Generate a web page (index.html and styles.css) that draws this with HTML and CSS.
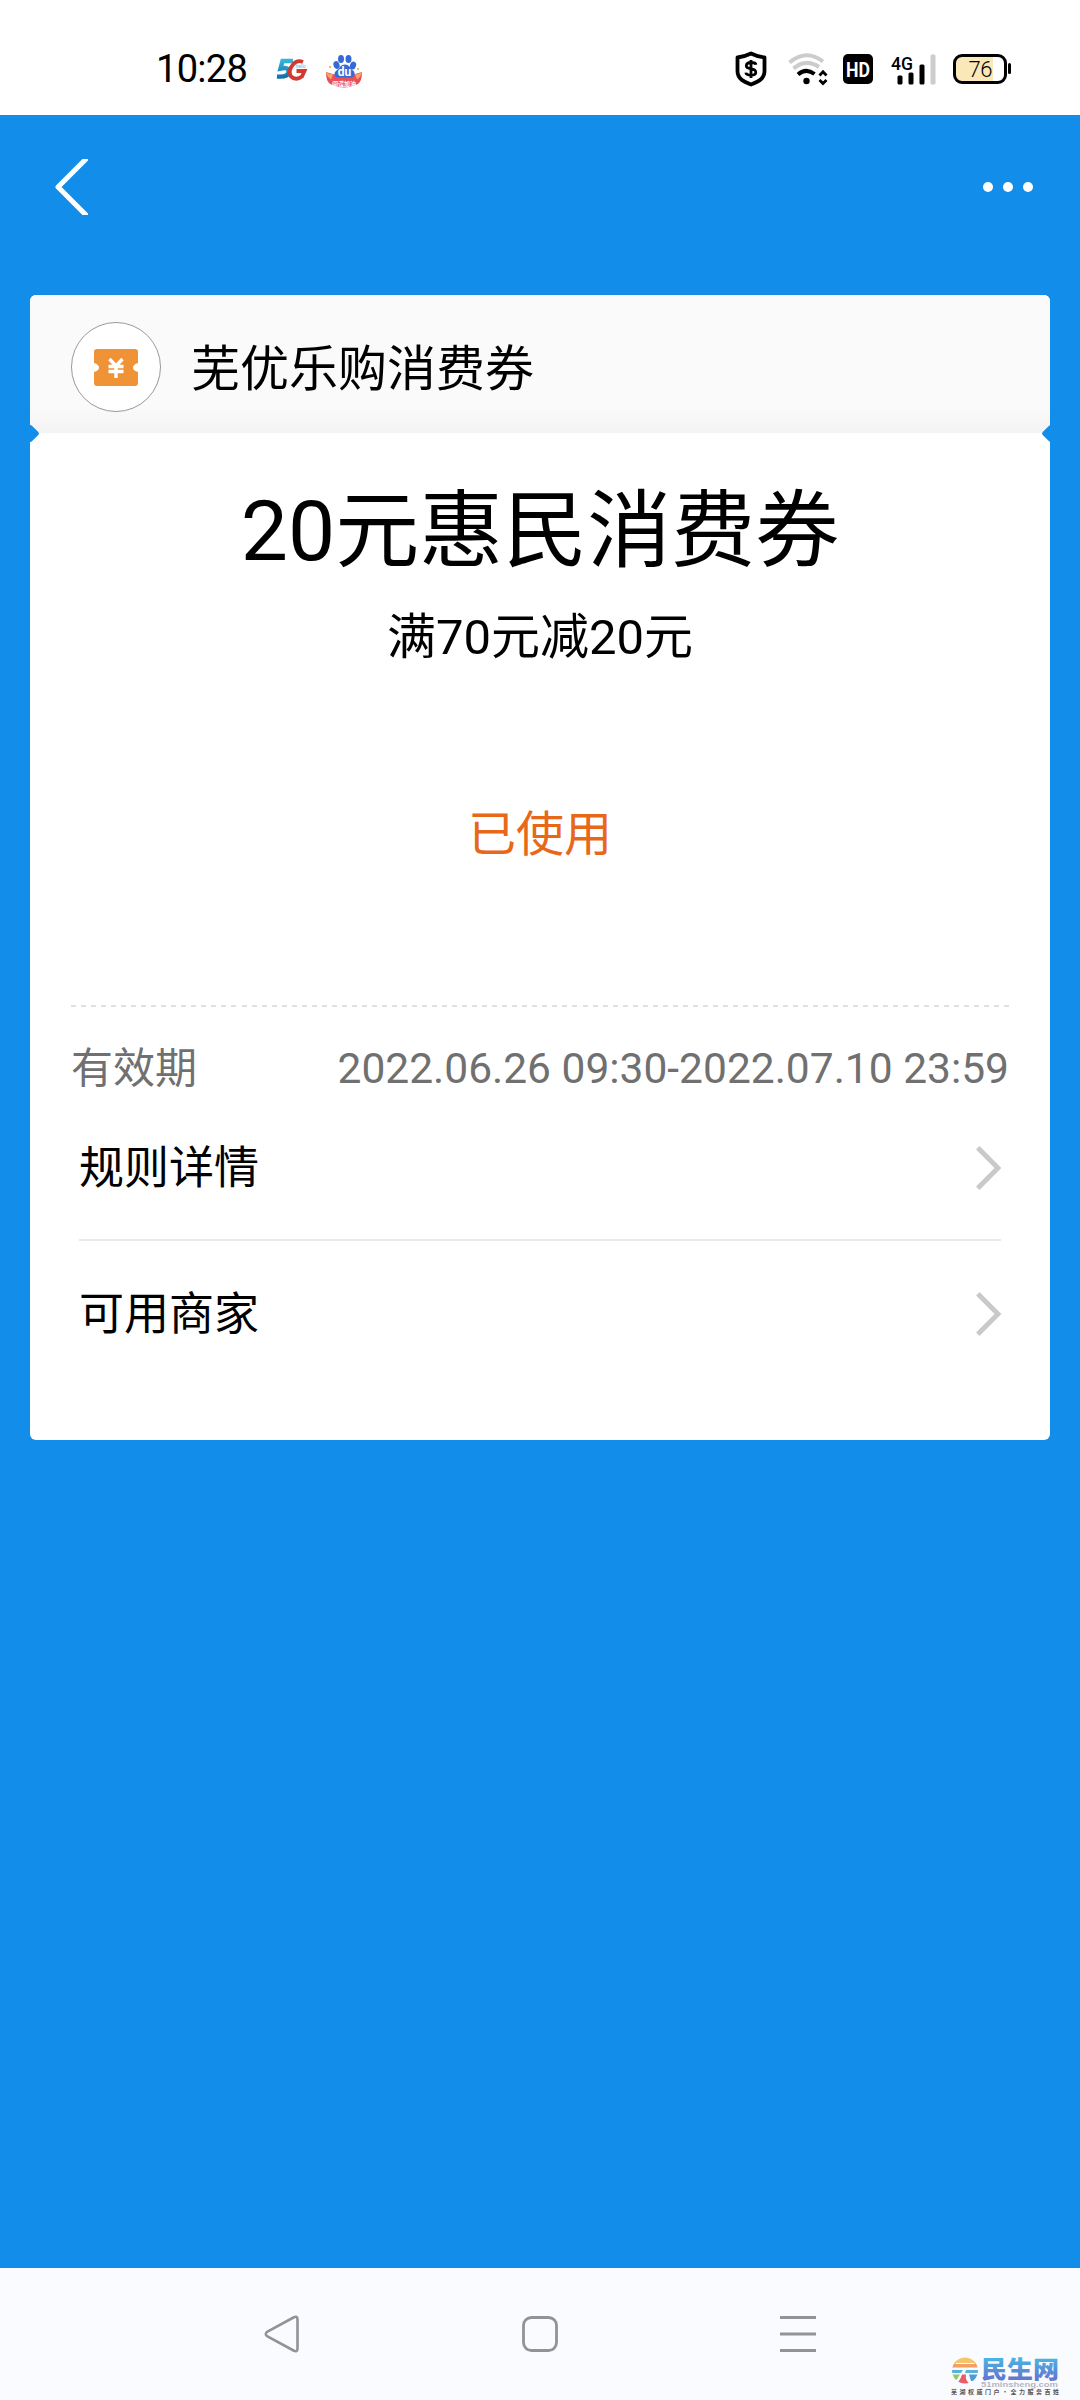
FILE: index.html
```html
<!DOCTYPE html>
<html lang="zh-CN">
<head>
<meta charset="utf-8">
<title>20元惠民消费券</title>
<link rel="stylesheet" href="styles.css">
</head>
<body>
<div class="screen">
  <header class="status">
    <span class="time">10:28</span>
    <svg class="ico-5g" width="32" height="26" viewBox="0 0 32 26">
      <defs><linearGradient id="g5" x1="0" y1="0" x2="0" y2="1"><stop offset="0" stop-color="#35b5d8"/><stop offset="1" stop-color="#1672ac"/></linearGradient></defs>
      <path d="M17 4H6.500L4.500 11.500Q13.500 9.500 12.500 15.500Q11.500 20.500 1 19.500" fill="none" stroke="url(#g5)" stroke-width="4.400"/>
      <path d="M27 5Q21 2.500 17 7.500Q11.500 14 15 19.500Q20 24 26 19.500L28.500 14H20.500" fill="none" stroke="#d23a30" stroke-width="3.800"/>
      <text x="19.500" y="10.500" class="t-hello">hello</text>
    </svg>
    <svg class="ico-du" width="38" height="36" viewBox="0 0 38 36">
      <path d="M1 18Q19 25 37 18Q37 27 33 30Q19 37 5 30Q1 27 1 18Z" fill="#e84f58"/>
      <path d="M1 18Q4 20 8 20.500L6 25.500Q2 23 1 18ZM37 18Q34 20 30 20.500L32 25.500Q36 23 37 18Z" fill="#f4a565"/>
      <g fill="#3569d8">
        <ellipse cx="11.500" cy="11" rx="3" ry="4" transform="rotate(-18 11.500 11)"/>
        <ellipse cx="16" cy="5" rx="3" ry="4"/>
        <ellipse cx="23.500" cy="5" rx="3" ry="4"/>
        <ellipse cx="28" cy="11.500" rx="3" ry="4" transform="rotate(18 28 11.500)"/>
        <path d="M20 10.500C24 10.500 25 14 28 16.500C31.500 19.500 29 24 25 23.500H14C9 24 8 19.500 11.500 16.500C15 14 15.500 10.500 20 10.500Z"/>
      </g>
      <text x="19.500" y="21.500" class="t-du">du</text>
      <text x="19" y="31.500" class="t-strip">间谍加油</text>
      <g fill="#f0a03c"><circle cx="5" cy="13" r="1"/><circle cx="33" cy="15" r="1"/></g>
    </svg>
    <span class="grow"></span>
    <svg class="ico-shield" width="32" height="36" viewBox="0 0 32 36">
      <path d="M16 2.500C11 5 7 6 2.500 6.500V20C2.500 28 9 31 16 33.500C23 31 29.500 28 29.500 20V6.500C25 6 21 5 16 2.500Z" fill="none" stroke="#000" stroke-width="3.800" stroke-linejoin="round"/>
      <path d="M21 13.700Q20.500 11.500 16 11.500T11.300 14.800Q11.300 17.200 16 17.800T20.800 21.200Q20.800 24.200 16 24.200T10.800 21.600M16 9V27" fill="none" stroke="#000" stroke-width="2.800"/>
    </svg>
    <svg class="ico-wifi" width="40" height="32" viewBox="0 0 40 32">
      <g fill="none" stroke-width="4">
        <path d="M1.500 9.500Q18 -4.500 35 8.500" stroke="#ccc"/>
        <path d="M5.500 15.500Q18 5 31 14" stroke="#ccc"/>
        <path d="M10 21.500Q18 14.500 26.500 21" stroke="#000"/>
      </g>
      <circle cx="18.500" cy="28" r="3.200"/>
      <path d="M31.500 22.500L35 18.800L38.500 22.500M31.500 27L35 30.500L38.500 27" fill="none" stroke="#000" stroke-width="2.800"/>
    </svg>
    <svg class="ico-hd" width="30" height="30" viewBox="0 0 30 30">
      <rect width="30" height="30" rx="5"/>
      <text x="15" y="22.500" textLength="24" lengthAdjust="spacingAndGlyphs" class="t-hd">HD</text>
    </svg>
    <svg class="ico-signal" width="46" height="32" viewBox="0 0 46 32">
      <text x="0" y="15.500" textLength="22" lengthAdjust="spacingAndGlyphs" class="t-4g">4G</text>
      <rect x="6.500" y="21.500" width="5" height="9" rx="1.500"/>
      <rect x="17.500" y="18.500" width="5" height="12" rx="1.500"/>
      <rect x="28.500" y="10.500" width="5" height="20" rx="1.500"/>
      <rect x="39.500" y="0.500" width="5" height="30" rx="1.500" fill="#ccc"/>
    </svg>
    <svg class="ico-battery" width="58" height="30" viewBox="0 0 58 30">
      <rect x="1.500" y="1.500" width="51" height="27" rx="7" fill="#fff"/>
      <path d="M40 2H8Q2 2 2 8V22Q2 28 8 28H40Z" fill="#fae8b8"/>
      <rect x="1.500" y="1.500" width="51" height="27" rx="7.500" fill="none" stroke="#000" stroke-width="3"/>
      <rect x="55" y="9" width="3" height="11" rx="1.500"/>
      <text x="27.500" y="22.500" textLength="24" class="t-bat">76</text>
    </svg>
  </header>

  <main class="page">
    <nav class="topbar">
      <svg width="33" height="56" viewBox="0 0 33 56"><path d="M34 -3L3 28L34 59" fill="none" stroke="#fff" stroke-width="5" stroke-linejoin="round"/></svg>
      <span class="dots"><i></i><i></i><i></i></span>
    </nav>

    <section class="card">
      <div class="brand">
        <span class="logo">
          <svg width="44" height="37" viewBox="0 0 44 37">
            <path d="M3 0H41Q44 0 44 3V14Q39 15.500 39 18.500T44 23V34Q44 37 41 37H3Q0 37 0 34V23Q5 21.500 5 18.500T0 14V3Q0 0 3 0Z" fill="#f09236"/>
            <path d="M15.500 10L22 17L28.500 10M14.500 17.500H29.500M14.500 22.500H29.500M22 17V29" fill="none" stroke="#fff" stroke-width="3.400"/>
          </svg>
        </span>
        <span class="brand-name">芜优乐购消费券</span>
      </div>
      <h1 class="title">20元惠民消费券</h1>
      <p class="terms">满70元减20元</p>
      <p class="state">已使用</p>
      <div class="dash"></div>
      <div class="validity"><span>有效期</span><span class="dates">2022.06.26 09:30-2022.07.10 23:59</span></div>
      <div class="links">
        <a class="link"><span class="label">规则详情</span><svg width="25" height="44" viewBox="0 0 25 44"><path d="M1.800 1.800L22 22L1.800 42.200" fill="none" stroke="#c9c9c9" stroke-width="4.800"/></svg></a>
        <a class="link"><span class="label">可用商家</span><svg width="25" height="44" viewBox="0 0 25 44"><path d="M1.800 1.800L22 22L1.800 42.200" fill="none" stroke="#c9c9c9" stroke-width="4.800"/></svg></a>
      </div>
    </section>
  </main>

  <footer class="sysnav">
    <svg width="36" height="38" viewBox="0 0 36 38"><path d="M29.500 2.500L3.500 16.500Q0 19 3.500 21.500L29.500 35.500Q33.500 37.500 33.500 33.500V4.500Q33.500 0.500 29.500 2.500Z" fill="none" stroke="#919395" stroke-width="2.600"/></svg>
    <svg width="36" height="38" viewBox="0 0 36 38"><rect x="1.500" y="2.500" width="33" height="33" rx="8" fill="none" stroke="#919395" stroke-width="2.800"/></svg>
    <svg width="36" height="38" viewBox="0 0 36 38"><path d="M0 2.500H36M0 19H36M0 35.500H36" stroke="#919395" stroke-width="3"/></svg>
  </footer>

  <svg class="watermark" width="112" height="42" viewBox="0 0 112 42">
    <defs>
      <linearGradient id="wm" x1="0" y1="0" x2="0" y2="1"><stop offset="0.200" stop-color="#48b8e4"/><stop offset="0.800" stop-color="#6478d0"/></linearGradient>
      <clipPath id="disc"><circle cx="15" cy="14.500" r="13"/></clipPath>
    </defs>
    <g clip-path="url(#disc)">
      <rect x="0" y="1" width="30" height="6.500" fill="#f5c56c"/>
      <rect x="0" y="7.500" width="30" height="4" fill="#f2a063"/>
      <path d="M0 14H13L11 17H0Z" fill="#5bb0e0"/>
      <path d="M16 14H30V17H15Z" fill="#5bb0e0"/>
      <path d="M0 18.500H10L5 26H0Z" fill="#8fcb60"/>
      <path d="M12 18.500Q10 25 6 28H20Q15 25 16 18.500Z" fill="#ea5d68"/>
      <path d="M19 18.500H30V25H21Z" fill="#4b9bd5"/>
      <path d="M6 7.500H24M4 12.500H26" stroke="#fff" stroke-width="1.200"/>
    </g>
    <text x="31" y="22" textLength="78" lengthAdjust="spacingAndGlyphs" class="w-name">民生网</text>
    <text x="31" y="30.500" textLength="77" lengthAdjust="spacingAndGlyphs" class="w-url">51minsheng.com</text>
    <text x="1" y="37.500" textLength="108" class="w-tag">芜湖权威门户·全力服务百姓</text>
  </svg>
</div>
</body>
</html>
```
FILE: styles.css
```css
* { box-sizing: border-box; }

body {
  margin: 0;
  font-family: Roboto, "Noto Sans CJK SC", sans-serif;
  color: #000;
}

h1, p { margin: 0; font-weight: 400; }
svg { display: block; flex: none; overflow: visible; }

.screen {
  position: relative;
  display: flex;
  flex-direction: column;
  width: 1080px;
  height: 2400px;
  overflow: hidden;
}

/* Status bar */
.status {
  display: flex;
  align-items: flex-start;
  height: 115px;
  padding: 0 69px 0 156px;
  background: #fff;
}
.time { width: 93px; margin-top: 47px; font-size: 38px; line-height: 45px; letter-spacing: -0.7px; white-space: nowrap; }
.grow { flex: 1; }
.ico-5g { margin: 57px 0 0 27px; }
.ico-du { margin: 54px 0 0 17px; }
.ico-shield { margin: 51px 21px 0 0; }
.ico-wifi { margin: 53px 15px 0 0; }
.ico-hd { margin: 54px 18px 0 0; }
.ico-signal { margin: 53.500px 16px 0 0; }
.ico-battery { margin-top: 54px; }
.t-hello { font: italic 5px Roboto, sans-serif; fill: #5bb5dc; }
.t-du { font: 700 12px Roboto, sans-serif; fill: #fff; text-anchor: middle; }
.t-strip { font: 700 6px "Noto Sans CJK SC", sans-serif; fill: #fff; text-anchor: middle; }
.t-hd { font: 700 21px Roboto, sans-serif; fill: #fff; text-anchor: middle; }
.t-4g { font: 500 19px Roboto, sans-serif; }
.t-bat { font: 300 22px Roboto, sans-serif; text-anchor: middle; }

/* App page */
.page { flex: 1; background: #128eea; }
.topbar {
  display: flex;
  align-items: center;
  justify-content: space-between;
  height: 180px;
  padding: 0 47px 36px 55px;
}
.topbar svg { overflow: hidden; }
.dots { display: flex; gap: 9.500px; }
.dots i { width: 10.300px; height: 10.300px; border-radius: 50%; background: #fff; }

.card {
  height: 1145px;
  margin: 0 30px;
  border-radius: 6px;
  background: #fff;
}
.brand {
  position: relative;
  display: flex;
  align-items: center;
  height: 138px;
  padding: 6px 41px 0;
  border-radius: 6px 6px 0 0;
  background: linear-gradient(#fafafa 0, #fafafa 82%, #f3f3f3 100%);
}
.brand::before,
.brand::after {
  content: "";
  position: absolute;
  bottom: -6.500px;
  width: 13px;
  height: 13px;
  border-radius: 2px;
  background: #128eea;
  transform: rotate(45deg);
}
.brand::before { left: -6.500px; }
.brand::after { right: -6.500px; }
.logo {
  display: flex;
  align-items: center;
  justify-content: center;
  width: 90px;
  height: 90px;
  border: 1px solid #999;
  border-radius: 50%;
  background: #fff;
}
.brand-name { margin: 5px 0 0 30px; font-size: 49px; line-height: 70px; }

.title { padding-top: 39px; font-size: 84px; line-height: 120px; text-align: center; }
.terms { padding-top: 11px; font-size: 49px; line-height: 70px; text-align: center; }
.state { padding-top: 127px; font-size: 48px; line-height: 70px; text-align: center; color: #e8681a; }

.dash {
  height: 2px;
  margin: 135px 40px 0 41px;
  background: repeating-linear-gradient(90deg, #e0e0e0 0 5px, transparent 5px 10.030px);
}
.validity {
  display: flex;
  justify-content: space-between;
  padding: 35px 41px 0;
  font-size: 42px;
  line-height: 54px;
  color: #707070;
}
.dates { font-size: 42.500px; }

.links { padding: 0 49px; }
.link {
  display: flex;
  align-items: center;
  justify-content: space-between;
  height: 143px;
  font-size: 45px;
  line-height: 64px;
}
.link + .link { height: 147px; border-top: 2px solid #ebebeb; }
.label { padding-top: 3px; }

/* System navigation */
.sysnav {
  display: flex;
  align-items: center;
  justify-content: space-between;
  height: 132px;
  padding: 0 264px;
  background: #fafbff;
}

.watermark { position: absolute; left: 950px; top: 2356px; }
.w-name { font: 900 24px "Noto Sans CJK SC", sans-serif; fill: url(#wm); }
.w-url { font: 700 7.500px "Liberation Sans", sans-serif; fill: #b2b8c2; }
.w-tag { font: 700 6px "Noto Sans CJK SC", sans-serif; fill: #555; }
```
